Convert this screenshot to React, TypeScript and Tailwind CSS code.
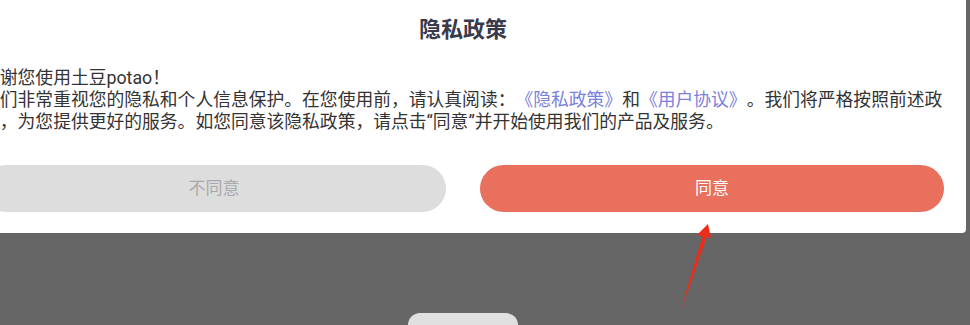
import React from 'react';

export default function App() {
  return (
    <div className="relative w-[970px] h-[325px] overflow-hidden bg-[#666666] font-['Roboto','Noto_Sans_CJK_SC',sans-serif]">
      {/* Privacy dialog */}
      <div className="ml-[-38px] w-[1004px] bg-white rounded-b-[4px] pl-[20px] pr-[22px] pb-[21px]">
        <h1 className="pt-[15px] text-center text-[22px] leading-[30px] font-bold text-[#393a4c]">
          隐私政策
        </h1>

        <div className="mt-[22px] text-[17.8px] leading-[22px] text-[#333333] whitespace-nowrap [text-spacing-trim:space-all]">
          <p>感谢您使用土豆potao！</p>
          <p>
            我们非常重视您的隐私和个人信息保护。在您使用前，请认真阅读：
            <span className="text-[#7b80dc]">《隐私政策》</span>和
            <span className="text-[#7b80dc]">《用户协议》</span>。我们将严格按照前述政
          </p>
          <p>策，为您提供更好的服务。如您同意该隐私政策，请点击“同意”并开始使用我们的产品及服务。</p>
        </div>

        <div className="mt-[32px] flex gap-[34px]">
          <button className="flex-1 h-[47px] rounded-full bg-[#dddddd] text-[17px] text-[#a9a9a9]">
            不同意
          </button>
          <button className="flex-1 h-[47px] rounded-full bg-[#e8705c] text-[17px] text-white">
            同意
          </button>
        </div>
      </div>

      {/* Element behind the overlay */}
      <div className="mt-[80px] ml-[408px] w-[110px] h-[20px] rounded-t-[12px] bg-[#e0e0e0]" />

      {/* Annotation arrow */}
      <svg className="absolute left-0 top-0 pointer-events-none" width="970" height="325">
        <defs>
          <linearGradient id="shaft" x1="682" y1="307" x2="706" y2="236" gradientUnits="userSpaceOnUse">
            <stop offset="0" stopColor="#ee2a1a" stopOpacity="0.3" />
            <stop offset="0.3" stopColor="#ee2a1a" stopOpacity="1" />
          </linearGradient>
        </defs>
        <polygon points="681.5,307 703,235 707,236 682.5,307" fill="url(#shaft)" />
        <polygon points="708,224 697,235 711,238" fill="#ee2a1a" />
      </svg>
    </div>
  );
}
